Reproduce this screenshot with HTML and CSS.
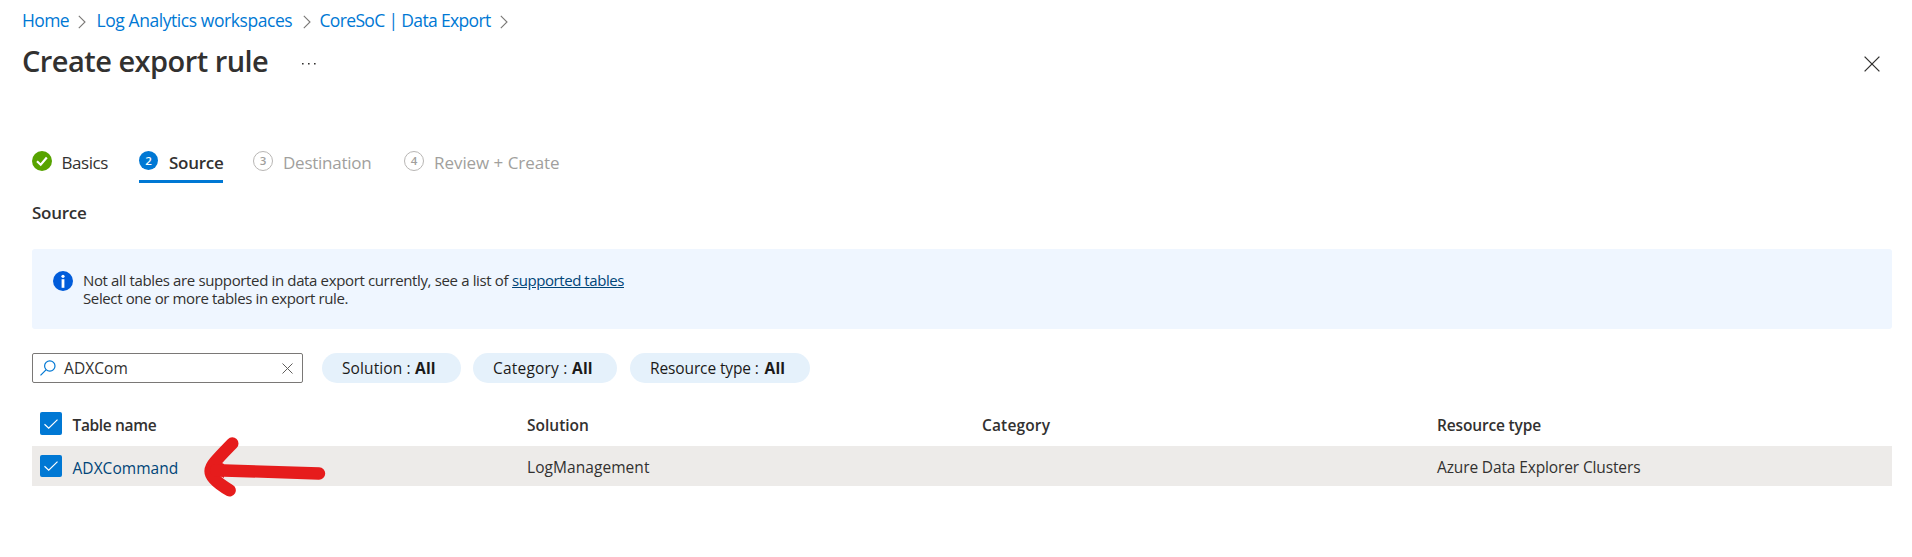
FILE: index.html
```
<!DOCTYPE html>
<html lang="en">
<head>
<meta charset="utf-8">
<title>Create export rule</title>
<link rel="stylesheet" href="styles.css">
</head>
<body>
<nav class="breadcrumb">
  <a class="crumb crumb-home">Home</a>
  <svg class="chevron" width="8" height="14" viewBox="0 0 8 14"><path d="M.8 .8 7 7 .8 13.2"/></svg>
  <a class="crumb crumb-workspaces">Log Analytics workspaces</a>
  <svg class="chevron" width="8" height="14" viewBox="0 0 8 14"><path d="M.8 .8 7 7 .8 13.2"/></svg>
  <a class="crumb crumb-export">CoreSoC | Data Export</a>
  <svg class="chevron" width="8" height="14" viewBox="0 0 8 14"><path d="M.8 .8 7 7 .8 13.2"/></svg>
</nav>
<header class="title-bar">
  <h1 class="title">Create export rule</h1>
  <svg class="more" width="16" height="4" viewBox="0 0 16 4"><path d="M1 1h1.6v1.6H1zM7 1h1.6v1.6H7zM13 1h1.6v1.6H13z"/></svg>
  <svg class="close" width="16" height="16" viewBox="0 0 16 16"><path d="M.6.6l14.8 14.8M15.4.6.6 15.4"/></svg>
</header>
<main class="content">
  <div class="tabs">
    <div class="tab tab-basics">
      <svg class="badge" width="20" height="20" viewBox="0 0 20 20"><circle cx="10" cy="10" r="10" fill="#57a300"/><path d="M5 10.2l3.7 3.5 6.1-7.2" fill="none" stroke="#fff" stroke-width="2.2"/></svg>
      <span class="tab-label">Basics</span>
    </div>
    <div class="tab tab-source">
      <span class="badge number active">2</span><span class="tab-label">Source</span>
    </div>
    <div class="tab tab-destination">
      <span class="badge number">3</span><span class="tab-label">Destination</span>
    </div>
    <div class="tab tab-review">
      <span class="badge number">4</span><span class="tab-label">Review + Create</span>
    </div>
  </div>
  <h2 class="section-title">Source</h2>
  <div class="info">
    <svg width="20" height="20" viewBox="0 0 20 20"><circle cx="10" cy="10" r="10" fill="#015cda"/><circle cx="10" cy="5.3" r="1.6" fill="#fff"/><path d="M8.6 8.2h2.8v8.6H8.6z" fill="#fff"/></svg>
    <div class="info-text">
      <div><span class="info-lead">Not all tables are supported in data export currently, see a list of</span> <a class="info-link">supported tables</a></div>
      <div class="info-second">Select one or more tables in export rule.</div>
    </div>
  </div>
  <div class="filters">
    <div class="search">
      <svg width="16" height="16" viewBox="0 0 16 16"><circle cx="9.8" cy="6" r="5.2" fill="none" stroke="#0078d4" stroke-width="1.2"/><path d="M6 9.8.5 15.3" stroke="#0078d4" stroke-width="1.2"/></svg>
      <span class="search-text">ADXCom</span>
      <svg width="11" height="11" viewBox="0 0 11 11"><path d="M.5.5l10 10M10.5.5l-10 10" stroke="#605e5c" stroke-width="1"/></svg>
    </div>
    <div class="pill pill-solution"><span>Solution :</span><b>All</b></div>
    <div class="pill pill-category"><span>Category :</span><b>All</b></div>
    <div class="pill pill-resource"><span>Resource type :</span><b>All</b></div>
  </div>
  <div class="table">
    <div class="row head">
      <div class="check"><svg width="14" height="10" viewBox="0 0 14 10"><path d="M.5 5.2l4.2 4L13.5.6"/></svg></div>
      <div class="h-name">Table name</div><div>Solution</div><div class="h-category">Category</div><div class="h-resource">Resource type</div>
    </div>
    <div class="row data">
      <div class="check"><svg width="14" height="10" viewBox="0 0 14 10"><path d="M.5 5.2l4.2 4L13.5.6"/></svg></div>
      <div class="name">ADXCommand</div><div class="d-solution">LogManagement</div><div></div><div class="d-resource">Azure Data Explorer Clusters</div>
    </div>
    <svg class="arrow" width="126" height="64" viewBox="0 0 126 64"><path class="arrow-fill" d="M15 26 21 29 21 43 12 38z"/><path d="M29.300 8.500C23 15 17 21 12 27 6 34 6 38 11 43.500 15 48 20 51.500 26.700 55.300"/><path d="M13 35.200 116 38.500"/></svg>
  </div>
</main>
</body>
</html>
```
FILE: styles.css
```
* { box-sizing: border-box; }
body {
  margin: 0;
  min-height: 557px;
  padding-top: 8px;
  background: #fff;
  color: #323130;
  font-family: "Open Sans", "Noto Sans", sans-serif;
  font-size: 15.5px;
  white-space: nowrap;
}
.breadcrumb {
  display: flex;
  align-items: center;
  height: 24px;
  padding-left: 22px;
  font-size: 17.5px;
  line-height: 24px;
}
.crumb { color: #0078d4; }
.crumb-home { width: 56px; letter-spacing: -.62px; }
.crumb-workspaces { width: 206px; margin-left: 10.5px; letter-spacing: -.43px; }
.crumb-export { width: 180px; margin-left: 9px; letter-spacing: -.66px; }
.chevron { flex: none; margin-top: 3px; fill: none; stroke: #7a7876; stroke-width: 1.1; }
.title-bar {
  display: flex;
  align-items: center;
  height: 40px;
  margin-top: 9px;
  padding: 0 32px 0 22px;
}
.title {
  width: 279px;
  margin: 0;
  font-size: 29px;
  font-weight: 600;
  line-height: 40px;
  letter-spacing: -.53px;
}
.more { margin-top: 5px; fill: #323130; }
.close { margin: 5px 0 0 auto; fill: none; stroke: #323130; stroke-width: 1.3; }
.content { padding: 67px 20px 0 32px; }
.tabs { display: flex; height: 35px; font-size: 17px; }
.tab { display: flex; align-items: flex-start; height: 35px; line-height: 30px; color: #a19f9d; }
.badge { flex: none; width: 20px; height: 20px; margin-top: 3px; }
.number {
  border: 1.5px solid #b8b6b4;
  border-radius: 50%;
  font-size: 11.5px;
  font-weight: 600;
  line-height: 17px;
  text-align: center;
}
.active { width: 19px; height: 19px; border: 0; background: #0078d4; color: #fff; line-height: 19px; }
.tab-basics { width: 107px; color: #323130; letter-spacing: -.43px; }
.tab-basics .tab-label { margin-left: 9.5px; }
.tab-source { width: 84px; border-bottom: 3px solid #0078d4; color: #323130; font-weight: 600; letter-spacing: -.25px; }
.tab-source .tab-label { margin-left: 11px; }
.tab-destination { width: 151px; margin-left: 30px; letter-spacing: -.25px; }
.tab-destination .tab-label { margin-left: 10px; }
.tab-review { letter-spacing: -.05px; }
.tab-review .tab-label { margin-left: 10px; }
.section-title {
  height: 24px;
  margin: 18px 0 0;
  font-size: 17px;
  font-weight: 600;
  line-height: 24px;
  letter-spacing: -.25px;
}
.info {
  display: flex;
  height: 80px;
  margin-top: 24px;
  padding: 22px 21px;
  border-radius: 3px;
  background: #eff6ff;
  font-size: 15px;
  line-height: 18px;
}
.info-text { margin-left: 10px; }
.info-lead { letter-spacing: -.36px; }
.info-link { color: #004578; text-decoration: underline; letter-spacing: -.44px; }
.info-second { letter-spacing: -.38px; }
.filters { display: flex; margin-top: 24px; height: 30px; line-height: 31px; }
.search {
  display: flex;
  align-items: center;
  width: 271px;
  height: 30px;
  margin-right: 19px;
  padding: 0 9px 0 7px;
  border: 1px solid #7a7876;
  border-radius: 2px;
}
.search-text { flex: 1; margin-left: 8px; letter-spacing: .09px; }
.pill { display: flex; height: 30px; padding-left: 20px; border-radius: 15px; background: #e5f1fb; color: #1b1a19; }
.pill span { flex: none; }
.pill b { letter-spacing: .2px; }
.pill-solution { width: 139px; margin-right: 12px; letter-spacing: .1px; }
.pill-solution span { width: 73px; }
.pill-category { width: 144px; margin-right: 13px; letter-spacing: .2px; }
.pill-category span { width: 79px; }
.pill-resource { width: 180px; letter-spacing: -.12px; }
.pill-resource span { width: 114.5px; }
.table { position: relative; margin-top: 19px; }
.row { display: grid; grid-template-columns: 40.5px 454.5px 455px 455px 455px; }
.head { height: 44px; line-height: 46px; font-weight: 600; }
.data { height: 40px; line-height: 43px; background: #edebe9; }
.check {
  display: flex;
  align-items: center;
  justify-content: center;
  width: 22px;
  height: 23px;
  margin: 10px 0 0 8px;
  border-radius: 2px;
  background: #0078d4;
}
.data .check { height: 22px; margin-top: 9px; }
.check svg { fill: none; stroke: #fff; stroke-width: 1.2; }
.h-name { letter-spacing: -.35px; }
.h-category { letter-spacing: .15px; }
.h-resource { letter-spacing: -.157px; }
.name { line-height: 44px; color: #004578; letter-spacing: .04px; }
.d-solution { letter-spacing: .06px; }
.d-resource { letter-spacing: -.13px; }
.arrow {
  position: absolute;
  left: 171px;
  top: 33px;
  overflow: visible;
  fill: none;
  stroke: #e61c1c;
  stroke-width: 12.4;
  stroke-linecap: round;
  stroke-linejoin: round;
}
.arrow-fill { fill: #e61c1c; stroke: none; }
```
